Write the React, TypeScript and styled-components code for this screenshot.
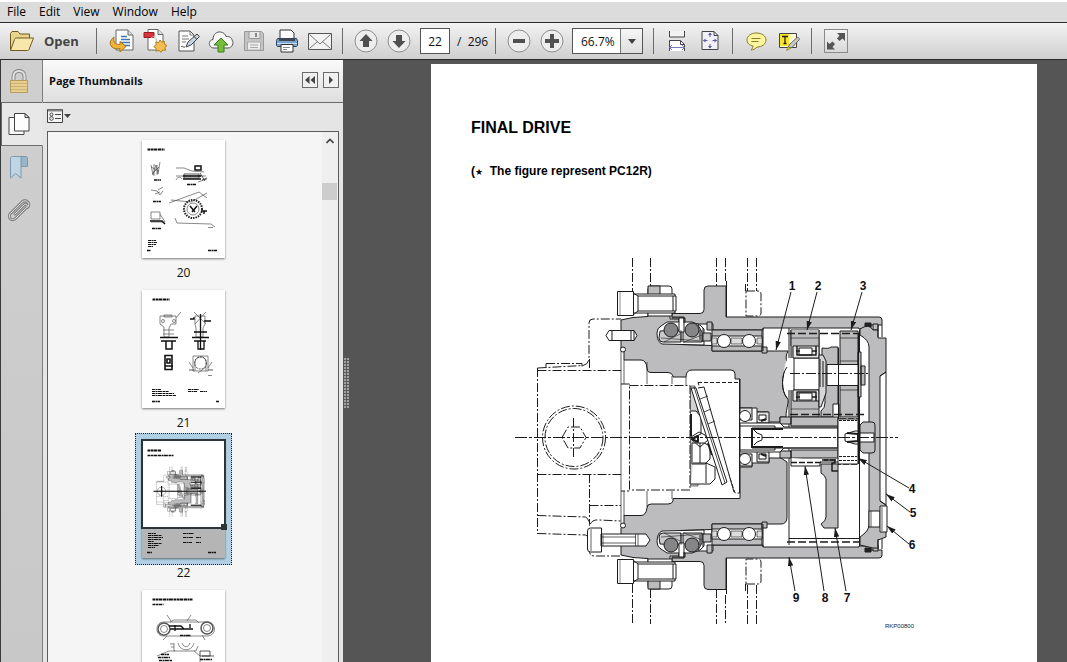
import React from 'react';
import styled, { createGlobalStyle, css } from 'styled-components';

const Global = createGlobalStyle`
  *, *::before, *::after { box-sizing: border-box; }
  body { margin: 0; font-family: "Open Sans", "Noto Sans", sans-serif; font-size: 12px; color: #111; }
  button, input, select { font: inherit; color: inherit; }
`;

const ink = '#1c1c1c';

/* ---------- Shell ---------- */

const Shell = styled.div`
  display: flex;
  flex-direction: column;
  height: 100vh;
  overflow: hidden;
  background: #555;
`;

const MenuBar = styled.nav`
  display: flex;
  flex: none;
  gap: 13px;
  height: 22px;
  padding: 0 7px;
  border-top: 2px solid #fff;
  background: #dcdcdc;
`;

const MenuItem = styled.button`
  padding: 0;
  border: 0;
  background: none;
  line-height: 20px;
  color: #000;
`;

const Toolbar = styled.div`
  display: flex;
  flex: none;
  align-items: center;
  height: 38px;
  padding-left: 9px;
  border: solid #2b2b2b;
  border-width: 1px 0;
  background: linear-gradient(#f3f3f3, #cfcfcf);
`;

const OpenButton = styled.button`
  display: flex;
  align-items: center;
  gap: 9px;
  width: 87px;
  padding: 0;
  border: 0;
  background: none;
  font-size: 13px;
  font-weight: 700;
  color: #444;
`;

const Separator = styled.span`
  flex: none;
  width: 1px;
  height: 26px;
  background: #6b6b6b;
`;

const ToolGroup = styled.div<{ $start?: number; $end?: number }>`
  display: flex;
  align-items: center;
  padding-left: ${(p) => p.$start ?? 6}px;
  padding-right: ${(p) => p.$end ?? 6}px;
`;

const ToolButton = styled.button`
  display: grid;
  place-items: center;
  flex: none;
  width: 33px;
  height: 28px;
  padding: 0;
  border: 0;
  background: none;
`;

const PageInput = styled.input`
  width: 30px;
  height: 26px;
  margin-left: 5px;
  padding: 0;
  border: 1px solid #555;
  background: #fff;
  text-align: center;
`;

const PageCount = styled.span`
  width: 38px;
  margin-left: 7px;
  white-space: pre;
`;

const ZoomBox = styled.div`
  position: relative;
  width: 71px;
  height: 26px;
  margin: 0 4px;
`;

const ZoomSelect = styled.select`
  width: 71px;
  height: 26px;
  padding: 0 0 0 8px;
  appearance: none;
  border: 1px solid #555;
  border-radius: 0;
  background: #fff;
`;

const ZoomArrow = styled.span`
  position: absolute;
  top: 1px;
  right: 1px;
  display: grid;
  place-items: center;
  width: 22px;
  height: 24px;
  border-left: 1px solid #777;
  background: linear-gradient(#f6f6f6, #dedede);
  pointer-events: none;
`;

const ExpandButton = styled.button`
  display: grid;
  place-items: center;
  width: 24px;
  height: 24px;
  margin-left: 12px;
  padding: 0;
  border: 1px solid #8a8a8a;
  background: linear-gradient(#f2f2f2, #d8d8d8);
`;

/* ---------- Side panel ---------- */

const Body = styled.div`
  display: flex;
  flex: 1;
  min-height: 0;
`;

const Rail = styled.div`
  display: flex;
  flex-direction: column;
  flex: none;
  width: 43px;
  border-left: 1px solid #3a3a3a;
  background: linear-gradient(#cfcfcf, #c8c8c8);
`;

const RailButton = styled.button<{ $active?: boolean }>`
  display: grid;
  place-items: center;
  flex: none;
  width: 42px;
  height: 43px;
  padding: 0 6px 0 0;
  border: 0;
  border-right: 1px solid #7c7c7c;
  background: none;
  ${(p) =>
    p.$active &&
    css`
      height: 44px;
      margin-top: -1px;
      border: 1px solid #6a6a6a;
      border-right-color: #e5e5e5;
      background: #e8e8e8;
    `}
`;

const RailFill = styled.div`
  flex: 1;
  border-right: 1px solid #7c7c7c;
`;

const Panel = styled.section`
  display: flex;
  flex-direction: column;
  flex: none;
  width: 300px;
  background: #e5e5e5;
`;

const PanelHeader = styled.header`
  display: flex;
  flex: none;
  align-items: center;
  gap: 5px;
  height: 43px;
  padding: 0 4px 2px 6px;
  border-bottom: 1px solid #6a6a6a;
  background: linear-gradient(#fafafa, #dedede);
`;

const PanelTitle = styled.h2`
  flex: 1;
  margin: 0;
  font-size: 11px;
  font-weight: 700;
  color: #111;
`;

const SmallButton = styled.button`
  display: grid;
  place-items: center;
  width: 16px;
  height: 16px;
  padding: 0;
  border: 1px solid #6a6a6a;
  background: #f0f0f0;
`;

const PanelTools = styled.div`
  display: flex;
  flex: none;
  align-items: center;
  height: 28px;
  padding: 0 0 2px 4px;
`;

const OptionsButton = styled.button`
  display: flex;
  padding: 0;
  border: 0;
  background: none;
`;

const ListFrame = styled.div`
  display: flex;
  flex: 1;
  min-height: 0;
  margin: 0 4px;
  border: solid #5c5c5c;
  border-width: 1px 1px 0;
  background: #f5f5f5;
`;

const ThumbList = styled.ol`
  display: flex;
  flex: 1;
  flex-direction: column;
  align-items: center;
  gap: 2px;
  margin: 0;
  padding: 1px 3px 0 0;
  overflow: hidden;
  list-style: none;
`;

const ThumbItem = styled.li`
  flex: none;
  text-align: center;
  line-height: 16px;
`;

const ThumbButton = styled.button<{ $active?: boolean }>`
  display: block;
  position: relative;
  width: 97px;
  height: 132px;
  padding: 6px;
  border: 1px dotted ${(p) => (p.$active ? '#222' : 'transparent')};
  background: ${(p) => (p.$active ? '#b1d0e3' : 'none')};
`;

const ThumbPage = styled.svg`
  display: block;
  background: #fff;
  box-shadow: 0 1px 2px rgba(0, 0, 0, 0.5);
`;

const ViewFrame = styled.span`
  position: absolute;
  top: 5px;
  left: 5px;
  width: 85px;
  height: 90px;
  border: 2px solid #2e3338;

  &::after {
    content: '';
    position: absolute;
    right: -3px;
    bottom: -3px;
    width: 6px;
    height: 6px;
    background: #2e3338;
  }
`;

const ScrollTrack = styled.div`
  flex: none;
  width: 16px;
  background: #efefef;
`;

const ScrollUp = styled.button`
  display: grid;
  place-items: center;
  width: 16px;
  height: 18px;
  margin-bottom: 33px;
  padding: 0;
  border: 0;
  background: none;
`;

const ScrollThumb = styled.div`
  width: 15px;
  height: 17px;
  background: #cdcdcd;
`;

/* ---------- Document ---------- */

const Viewer = styled.main`
  display: flex;
  flex: 1;
  min-width: 0;
  padding: 4px 30px 0 0;
  background: #555;
`;

const Splitter = styled.div`
  display: flex;
  flex: none;
  align-items: center;
  width: 88px;
  padding: 40px 0 0 1px;
`;

const Grip = styled.span`
  width: 5px;
  height: 50px;
  background: radial-gradient(circle at 1px 1px, #a0a0a0 30%, transparent 60%) 0 0 / 3px 3px;
`;

const Sheet = styled.article`
  flex: 1;
  min-width: 0;
  padding: 52px 40px 0;
  overflow: hidden;
  background: #fff;
  color: #000;
  font-family: "Liberation Sans", Arial, sans-serif;
`;

const SheetTitle = styled.h1`
  margin: 0 0 24px;
  font-size: 16px;
  line-height: 24px;
`;

const SheetNote = styled.p`
  margin: 0;
  font-size: 12px;
  font-weight: 700;
  line-height: 14px;
  white-space: pre;
`;

const Star = styled.span`
  font-family: "DejaVu Sans", sans-serif;
  font-size: 9px;
  line-height: 1;
`;

const Figure = styled.figure`
  margin: 76px 0 0 39px;
`;

/* ---------- Icons ---------- */

const FolderIcon = () => (
  <svg width="26" height="22" viewBox="0 0 26 22" stroke="#6f5b1f" strokeLinejoin="round">
    <path d="M1.500 19.500V3.500l1.500-2h6l2 2.500h9.500v3" fill="#e9d48b" />
    <path d="M20.500 7v9l-2 3.500" fill="#cdb163" />
    <path d="M1.500 20.500L5.500 9.500c.3-1 .8-1.500 2-1.500H24.500L20 19.500c-.3.700-.8 1-1.500 1z" fill="#f7e7ab" />
  </svg>
);

const PaperIcon = ({ children }: { children?: React.ReactNode }) => (
  <svg width="26" height="26" viewBox="0 0 26 26" fill="none" strokeLinejoin="round">
    {children}
  </svg>
);

const ExportIcon = () => (
  <PaperIcon>
    <path d="M7 2h12l5 5v15H7z" fill="#fdfdfd" stroke="#666" />
    <path d="M19 2v5h5" stroke="#666" fill="#ddd" />
    <path d="M12 8.500h6M12 11.500h9M12 14.500h9M14 17.500h7" stroke="#3d78b5" strokeWidth="1.500" />
    <path d="M5 9c-4 3-5 7-2 10 2 2 5 2 8 1.500V24l6-5.500-6-5v3c-4 .5-7-1.500-6-7.500z" fill="#eeb33b" stroke="#a87312" />
  </PaperIcon>
);

const CreateIcon = () => (
  <PaperIcon>
    <path d="M6 1.500h10l5 5V22H6z" fill="#fdfdfd" stroke="#666" />
    <path d="M16 1.500v5h5" stroke="#666" fill="#ddd" />
    <path d="M2 4.500h10v5H2z" fill="#d9343a" stroke="#98191f" />
    <path d="M9 10c5-4 6 1 5 5" stroke="#bbb" />
    <path d="M18 12l1.700 2.200 2.800-.8-.2 2.800 2.700 1.300-2.200 2 .9 2.700-2.900-.2-1.700 2.400-2.200-2-3 .8.300-2.800-2.400-1.800 2.400-1.900-.3-2.800 2.900.6z" fill="#f2bf55" stroke="#b07c1d" />
  </PaperIcon>
);

const SignIcon = () => (
  <PaperIcon>
    <path d="M4 3h11l4 4v16H4z" fill="#fdfdfd" stroke="#555" />
    <path d="M15 3v4h4M7 8h6M7 11h7M7 14h4" stroke="#777" />
    <path d="M11 19l2-5 9-8 2.500 2.500-8.500 8.500z" fill="#c8d4df" stroke="#3c444c" />
    <path d="M6 19c2-2 2 1 4 0M19 8.500l2.500 2.500" stroke="#333" />
  </PaperIcon>
);

const CloudIcon = () => (
  <PaperIcon>
    <path d="M6 20c-6 0-6-8-1-8.500C5 6 9 3.500 12.500 4c3 .2 5 2.500 5.500 4.500 4-.5 6 2 6 3.500 2.500 3 0 8-4 8z" fill="#f6f6f6" stroke="#555" />
    <path d="M13 10l7 7h-4v7h-6v-7H6z" fill="#76bd3e" stroke="#3d7c17" />
  </PaperIcon>
);

const SaveIcon = () => (
  <PaperIcon>
    <path d="M3.500 3.500h17l2 2v17h-19z" fill="#c4c4c4" stroke="#999" />
    <path d="M8 3.500h11v7H8z" fill="#e8e8e8" stroke="#999" />
    <path d="M15 5v4" stroke="#888" strokeWidth="2" />
    <path d="M6.500 14h13v8h-13z" fill="#ececec" stroke="#aaa" />
    <path d="M9 17h8M9 19.500h8" stroke="#aaa" />
  </PaperIcon>
);

const PrintIcon = () => (
  <PaperIcon>
    <path d="M6 2h11l3 3v7H6z" fill="#fdfdfd" stroke="#333" />
    <path d="M3.500 10.500h19l1 2v5l-1 1h-19l-1-1v-5z" fill="#7ba2c9" stroke="#28425f" />
    <path d="M5 10h16v3H5z" fill="#3c4652" />
    <path d="M3 15.500h20" stroke="#c3d8ea" />
    <path d="M7 16.500h12v7.500H7z" fill="#fff" stroke="#333" />
    <path d="M9 19.500h7M9 21.500h4" stroke="#888" />
  </PaperIcon>
);

const MailIcon = () => (
  <PaperIcon>
    <path d="M1.500 5.500h23v16h-23z" fill="#f3f3f3" stroke="#555" />
    <path d="M2.500 6.500L13 16 23.500 6.500M2.500 20.500l8-7M23.500 20.500l-8-7" stroke="#777" />
  </PaperIcon>
);

const RoundIcon = ({ d }: { d: string }) => (
  <svg width="26" height="26" viewBox="0 0 26 26">
    <circle cx="13" cy="13" r="11" fill="#ededed" stroke="#8d8d8d" />
    <path d={d} fill="#505050" />
  </svg>
);

const FitWidthIcon = () => (
  <PaperIcon>
    <path d="M5.500 3v6h15V3" fill="#f3f3f3" stroke="#444" />
    <path d="M5.500 23V12.500h11l4 4V23" fill="#fdfdfd" stroke="#444" />
    <path d="M16.500 12.500v4h4" stroke="#444" />
    <path d="M5 19.500h16M8 17l-2.500 2.500L8 22M18 17l2.500 2.500L18 22" stroke="#7a7ab8" />
  </PaperIcon>
);

const FitPageIcon = () => (
  <PaperIcon>
    <path d="M5 3.500h12l4 4v14H5z" fill="#f1f1f7" stroke="#444" />
    <path d="M17 3.500v4h4" stroke="#444" />
    <path d="M13 5v4M13 16v4M6.500 12.500h4M15.500 12.500h4" stroke="#5e5ea8" />
    <path d="M11 7l2-2.500L15 7zM11 18l2 2.500 2-2.500zM8.500 10.500L6 12.500l2.500 2zM17.500 10.500l2.500 2-2.500 2z" fill="#5e5ea8" />
  </PaperIcon>
);

const CommentIcon = () => (
  <PaperIcon>
    <path d="M13 5c6 0 10 3 10 7s-4 7-9 7c-2 2-4 3-6 3 1-1 2-2.500 2-4-4-.800-6-3-6-6 0-4 4-7 9-7z" fill="#fbf5a0" stroke="#8b7c28" />
    <path d="M8.500 10.500h9M8.500 13.500h7" stroke="#8b7c28" />
  </PaperIcon>
);

const HighlightIcon = () => (
  <PaperIcon>
    <path d="M3.500 5.500h17v14h-17z" fill="#fdf9cf" stroke="#444" />
    <path d="M4 6h9v12H4z" fill="#f8e62c" />
    <path d="M6 8.500h6M9 8.500v7M7.500 15.500h3" stroke="#222" strokeWidth="1.300" />
    <path d="M12 20l1.500-3.500 7-6.500c2-1.500 3.500.5 2.500 2l-7 7.500z" fill="#c9c9c9" stroke="#666" />
    <path d="M10.500 22.500l1.500-4 2.500 2z" fill="#f0d800" stroke="#555" strokeWidth=".5" />
  </PaperIcon>
);

const ExpandIcon = () => (
  <svg width="20" height="20" viewBox="0 0 20 20" fill="#555">
    <path d="M11 2h8v8l-2.500-2.500L13.500 10 11 7.500 13.500 4.500zM9 18.500H1v-8L3.500 13l3-2.500L9 13l-2.500 3z" />
  </svg>
);

const LockIcon = () => (
  <svg width="22" height="26" viewBox="0 0 22 26" fill="none">
    <path d="M5.500 12V7.500c0-7.500 11-7.500 11 0V12" stroke="#8a8a8a" strokeWidth="4" />
    <path d="M5.500 12V7.500c0-7.500 11-7.500 11 0V12" stroke="#dedede" strokeWidth="2" />
    <path d="M2.500 11.500h17v12h-17z" fill="#e9cf8c" stroke="#b59c63" />
    <path d="M3 14.500h16M3 17.500h16M3 20.500h16" stroke="#cbb077" />
  </svg>
);

const PagesIcon = () => (
  <svg width="24" height="26" viewBox="0 0 24 26" strokeLinejoin="round" stroke="#444">
    <path d="M2 6.500h15v17H2z" fill="#fafafa" />
    <path d="M7.500 2.500h10.500l4 4V20H7.500z" fill="#fdfdfd" />
    <path d="M18 2.500v4h4z" fill="#ddd" />
  </svg>
);

const BookmarkIcon = () => (
  <svg width="22" height="26" viewBox="0 0 22 26" strokeLinejoin="round" stroke="#7b98ad">
    <path d="M12 1.500h5.500c1.500 0 2 .800 2 2v8H12z" fill="#98b5c9" />
    <path d="M14.500 1.500H4.500c-1.500 0-2 1-2 2V23l5-4.500 5.500 4.500V4c0-1.500.5-2.500 1.500-2.500z" fill="#c0d5e3" />
  </svg>
);

const ClipIcon = () => (
  <svg width="24" height="26" viewBox="0 0 24 26" fill="none" strokeLinecap="round">
    {['#858585', '#dadada'].map((stroke, i) => (
      <path key={stroke} stroke={stroke} strokeWidth={i ? 1 : 3} d="M8 16l9-9c2-2 4.500.5 2.500 2.500L9 20c-4 4-9-.5-5.500-4.500L15 4c4-3.500 9.500 1.500 5.500 5.500" />
    ))}
  </svg>
);

/* ---------- Final drive section drawing ---------- */

const grey = '#bcbcbe';
const dashDot = '9 2 2 2';

/* Parts that repeat, mirrored, above and below the shaft axis. */
const MirroredParts = () => (
  <g>
    {/* flange screw */}
    <path d="M648 296v-6q0-3 3-3h18q3 0 3 3v27h-24z" fill="#fff" />
    <path d="M648 296v-9h12v9z" fill={grey} />
    <path d="M633 295h42v19h-42z" fill="#fff" />
    <path d="M617.500 292.500h16v24h-16zM638 297h38v15h-38zM633 294l5 3M633 316l5-4M673 297v15" fill="#fff" />
    <path d="M620 293v23" strokeWidth=".5" />
    {/* mounting flange bolt */}
    <path d="M746 292h12q3 0 3 3v19q0 3-3 3h-12z" fill="none" strokeDasharray={dashDot} />
    <path d="M726.500 282v36M745.500 285v7" />
    {/* floating seal */}
    <path d="M657 334q0-5 4-7l6-4 25 0 8 3 4 4v16l-42-1q-5-2-5-11z" fill="#fff" />
    <path d="M660 332l-1 7q0 4 4 4h18v-12zM683 331v12h19v-10l-4-7" fill="#cacacc" />
    <path d="M679 319h5v14h-5z" fill="#fff" />
    <path d="M672 318h12v6M703 329v14M700 331v10" fill="none" />
    <path d="M661 339l42 3M664 343l16-8M684 343l18-7M681 331v12" strokeWidth=".6" />
    <circle cx="671" cy="331" r="7" fill="#858587" />
    <circle cx="692" cy="331" r="7" fill="#858587" />
    <path d="M707 323h5v8h-5zM703 334h8v8h-8z" fill={grey} />
    {/* main bearing */}
    <path d="M712 331h50v21h-50z" fill={grey} />
    <path d="M712 337h50v10h-50z" fill="#fff" />
    <path d="M712 339h5v6h-5zM757 339h5v6h-5zM731 339h11v6h-11z" fill="#ddd" strokeWidth=".6" />
    <circle cx="724" cy="342" r="6.500" fill="#fff" />
    <circle cx="749" cy="342" r="6.500" fill="#fff" />
    <path d="M762 348h5v6h-5z" fill={grey} />
    {/* cover seal */}
    <path d="M865 324h6v4h-6z" fill="#222" />
    <path d="M873 325h5v6h-5z" fill={grey} />
  </g>
);

const FinalDrive = ({ line = 1, labels = true }: { line?: number; labels?: boolean }) => (
  <g stroke={ink} strokeWidth={line} fill="none" strokeLinejoin="round">
    {/* hydraulic motor housing outline */}
    <g strokeDasharray={dashDot}>
      <path d="M537.500 369L583 366.500q6-1 6-8V324q0-4 4-4h28M537.500 369V535M537.500 371.500H621M589.500 360v12M546 364.500h36v3M546 364.500v4" />
      <path d="M537.500 475.500H621M589.500 475v50M589.500 506.500H621M537.500 516.500l48 1.500q4 2 4 9 2-7 10-6l21 1M537.500 534.500l48 1.500q4 1 4 8v8q0 5 5 5h27" />
      <path d="M621 385h8.500v107H621M629.500 386.500H690V491H629.500" />
      <circle cx="574" cy="438.500" r="31.500" />
      <circle cx="574" cy="438.500" r="29" />
      <path d="M562 438.500l6-10.500h12l6 10.500-6 10.500h-12zM573.500 419v40" />
      <path d="M632.500 259v34M650.500 259v28M716.500 259v28M725.500 259v23M747.500 259v33M756.500 259v33" />
      <path d="M632.500 585v40M650.500 590v35M716.500 590v35M725.500 596v29M747.500 586v39M756.500 586v39" />
    </g>

    {/* outer casing */}
    <path d="M672 314.500h28q4 0 4-4V291q0-4 4-4h18v31h153q3 0 3 3v5h-11v4h-12v-1h-96v2h-50v-6h-28v-6h-13z" fill={grey} />
    <path d="M672 562.500h28q4 0 4 4v20q0 4 4 4h18V559h153q3 0 3-3v-5h-11v-4h-12v1h-96v-2h-50v6h-28v6h-13z" fill={grey} />

    {/* hub, upper and lower halves */}
    <path
      d="M621 321L633 318.500L648 317.500V314H670V320H679V345.500L712 346.500V352H788C784 360 788 362 787 368C781 376 781 392 787 399C790 402 786 408 786 418H780V423H768V413H757V409H740V380H735V375Q735 371 731 371H692Q686 371 686 378H673V377Q672 373.500 668 373.500H651Q647 373.500 647 369Q646 361 641 361H624V352L621 348Z"
      fill={grey}
    />
    <path
      d="M621 556L633 558.500L648 559.500V563H670V557H679V531.500L712 530.500V525H781Q787 525 787 518V463L781 459H769V464H752V468H740V499.500H673V502Q672 505 668 505H651Q647 505 647 509Q646 516.500 641 516.500H624V525L621 529Z"
      fill={grey}
    />
    <path d="M621 348v180M624 361v24M624 492v25M647 363v22M672 377v8M672 492v8M647 492v16M686 378v8" strokeWidth=".7" />
    <circle cx="623" cy="350.500" r="2.500" fill="#fff" />
    <circle cx="623" cy="526.500" r="2.500" fill="#fff" />

    <MirroredParts />
    <g transform="matrix(1 0 0 -1 0 877)">
      <MirroredParts />
    </g>

    {/* locating pin and motor screw */}
    <path d="M609 331.500h25v10h-25l-3-5zM634 331.500l3 5-3 5M612 332v9M631 332v9" fill="#fff" />
    <path d="M601 535h45l4 6-4 6h-45zM587.500 532q0-3 3-3h11v24h-11q-3 0-3-3z" fill="#fff" />
    <path d="M603 536v11M635.500 535v12M638 535v12M591 530v22M601 538h35M601 544h35" strokeWidth=".7" />

    {/* swash plate and pistons */}
    <path d="M698 383.500h41.500V494H735z" fill="#fff" strokeDasharray="4 2" />
    <path d="M739.500 380v114" />
    <path d="M690.500 387h4.500l3 28v72h-7.500z" fill="#d2d2d4" strokeWidth=".6" />
    <path d="M691 412h5l5 6v17l-9 4M691 438l8-5 6 3 3 5-8 7-9-8M692 444h12l6 3v13l-5 5h-13zM693 464h13l9 4v12l-5 5h-19M700 444v20M706 464v20" fill="#fff" />
    <path d="M691 415v22M692 440l6-3v6zM708 444l4 12" strokeWidth="2" />
    <path d="M691 389h5l31 94-5 3zM698 389l6-1 30 105" fill="#fff" />
    <path d="M694 388l31 96M700 400l8-3M704 413l7-3M708 425l7-3" strokeWidth=".8" />

    {/* shaft support bearing */}
    <path d="M740 409h12v12h-12zM740 455h12v12h-12zM757 413h12v11h-12zM757 452h12v11h-12z" fill="#e2e2e4" />
    <circle cx="745" cy="417" r="5.500" fill="#fff" />
    <circle cx="745" cy="460" r="5.500" fill="#fff" />
    <path d="M759 416h7v5h-7zM759 455h7v5h-7z" fill="#fff" />
    <path d="M761 422l5-2M761 455l5 2" strokeWidth="2" />

    {/* gear train */}
    <path d="M789 329v217M859.500 331v216M763 329v23M763 525v23" />
    <path d="M791 331h28v16h-28z" fill={grey} />
    <path d="M791 331v87h28v-87" fill={grey} />
    <path d="M791 339h28M791 410h28" strokeWidth=".6" />
    <path d="M788 359h32v32h-32q-4-6-4-16t4-16z" fill="#fff" stroke="none" />
    <path d="M794 359h26v32h-26z" fill="#fff" />
    <path d="M793 347h26v12h-26zM793 391h26v11h-26z" fill="#e6e6e6" />
    <path d="M799 349h13v7h-13zM799 394h13v7h-13z" fill="#fff" />
    <path d="M797 347v9h19v-9M797 402v-9h19v9M796 352h4M812 352h5M796 398h4M812 398h5" strokeWidth="1.500" />
    <path d="M822 349q7 1 9-1h7v70h-17v-6q4-3 4-8v-42h-3z" fill={grey} />
    <path d="M819 356h4l3 6v32l-5 14h-2z" fill="#d6d6d8" />
    <path d="M840 332h18v86h-18z" fill={grey} />
    <path d="M840 339h18M840 362h18M840 391h18" strokeWidth=".7" />
    <path d="M827 365.500h34v21h-34z" fill="#fff" />
    <path d="M858 353h3v45h-3zM861 367h4v19h-4z" fill={grey} />
    <path d="M833 405h6v15h-6z" fill="#fff" />
    <path d="M838.500 349v115M858.500 335v130M820 360v28M823 362v26" />
    <path d="M787 334.500h78M790 415.500h74" strokeWidth="1.500" strokeDasharray="8 3" />
    <path d="M790 374.500h78" strokeDasharray="10 2 2 2" />
    <path d="M787 368c-6 8-6 24 0 31" />

    {/* sun gear and drive shaft */}
    <path d="M780 418h11v7h-11zM791 418h47v9h-47zM780 452h11v7h-11zM791 451h47v8h-47z" fill={grey} />
    <path d="M791 459v8h29v-4h18" fill="#fff" />
    <path d="M791 463.500h30M822 461h16M840 420h18v45h-20" strokeWidth="1.500" strokeDasharray="6 2" />
    <path d="M740 424h40l4 4h54v21h-54l-4 4h-40z" fill="#fff" />
    <path d="M752 429h86v20h-86zM740 427h35v3M740 451h35v-3" />
    <path d="M752 429v20M753 430h30M753 448h30" strokeWidth="2" />
    <path d="M754 431l3 3 5 2v5l-5 2-3 3" />
    <path d="M838 420h20v45h-20z" fill="#fff" />
    <path d="M839 421.500h18M839 457.500h18M839 461.500h18" strokeDasharray="3 1" />

    {/* lower carrier */}
    <path d="M821 465h17v64h-14l-3-4q5-3 5-7v-38q-1-4-5-6z" fill={grey} />
    <path d="M824 461h11v3h-3v8h6" strokeWidth="1.500" />
    <path d="M789 539.500h70" />
    <path d="M787 543h74" strokeWidth="1.500" strokeDasharray="8 3" />

    {/* end cover, centre bolt and plug */}
    <path d="M860 330q9-6 13 1h5v8h8v34l-6 4v125l6 4v32l-8 3v8h-5l-13-3v-8q9-6 9-12V348q0-7-9-12z" fill={grey} />
    <path d="M886 373v133M880 377l6-4M880 502l6 4M878 326v12M882 326v12M878 540v10M882 540v10" />
    <path d="M863 423h9q3 0 3 3v25q0 3-3 3h-9l-3-3v-25z" fill={grey} />
    <path d="M860 434h14v9h-14zM845 435l10-3h3v13h-3l-10-3z" fill="#fff" />
    <path d="M847 434l11 1v7l-11 1" strokeWidth="2" />
    <path d="M869 512h11v16h-11z" fill="#fff" />
    <path d="M880 507h7v26h-7z" fill="#fff" />
    <path d="M882 508v24M871 512v16" strokeWidth=".7" />

    {/* shaft axis */}
    <path d="M515 438.500h383" strokeDasharray="12 2 3 2" strokeWidth={line * 1.2} />

    {labels && (
      <g>
        <defs>
          <marker id="tip" viewBox="0 0 10 6" refX="10" refY="3" markerWidth="9" markerHeight="6" markerUnits="userSpaceOnUse" orient="auto">
            <path d="M0 0L10 3L0 6z" fill={ink} stroke="none" />
          </marker>
        </defs>
        {[
          'M791 293L776 351',
          'M817 293L807 331',
          'M862 293L851 331',
          'M909 489L858 459',
          'M910 513L886 495',
          'M909 545L887 527',
          'M846 592L835 529',
          'M824 592L805 467',
          'M795 592L789 558',
        ].map((d) => (
          <path key={d} d={d} markerEnd="url(#tip)" />
        ))}
        <g fill="#111" stroke="none" fontFamily='"Liberation Sans Narrow", "Liberation Sans", sans-serif' fontSize="12" fontWeight="700" textAnchor="middle">
          <text x="792" y="291">1</text>
          <text x="818" y="291">2</text>
          <text x="863" y="291">3</text>
          <text x="912" y="494">4</text>
          <text x="913" y="518">5</text>
          <text x="912" y="550">6</text>
          <text x="847" y="603">7</text>
          <text x="825" y="603">8</text>
          <text x="796" y="603">9</text>
        </g>
        <text x="885" y="629" fill="#222" stroke="none" fontFamily='"Liberation Sans", sans-serif' fontSize="6">RKP00800</text>
      </g>
    )}
  </g>
);

/* ---------- Thumbnails ---------- */

const Scribble = ({ d, w = 2 }: { d: string; w?: number }) => (
  <path d={d} stroke="#111" strokeWidth={w} strokeDasharray="3 .5 2 .4 4 .6" fill="none" />
);

const Thumb20 = () => (
  <g fill="none" stroke="#555" strokeWidth=".7">
    <Scribble d="M5.500 9.500h17" />
    <path d="M9 25l2 10 3-10 2 9 2-12M9 27l8 4M10 34l7-7M12 24v12M15 25v10" />
    <path d="M34 28h8l8 3 12 1M34 40c2-4 5-3 6-1M56 42l9-3M34 36h30" />
    <path d="M53 26h6v4h-6zM41 36h18M41 39h18" stroke="#111" strokeWidth="1.500" />
    <path d="M42 34h15v4H42zM58 33l5 8M60 40l5-2" stroke="#111" />
    <path d="M9 50l6 1 3 4 3-4M16 50l5-3M13 54l5-2" />
    <path d="M9 72h9v7H9zM18 74l5 8M9 82h12" />
    <path d="M8 81h12l3 3" stroke="#111" strokeWidth="1.500" />
    <path d="M27 63l30-11 8 6M29 60l20 2 16-9M33 78l2 5 34 1 4 3" />
    <circle cx="51" cy="69" r="9" stroke="#222" strokeWidth="2" strokeDasharray="1.500 1" />
    <circle cx="51" cy="69" r="6" />
    <path d="M48 66l5 6M50 72l5-6M59 71h6M62 71v3" stroke="#111" strokeWidth="1.500" />
    <Scribble w={1.3} d="M12 40h7M11 61.500h8M10 88.500h9M45 44.500h9M66 110.500h9M5 110.500h4" />
    <Scribble w={1} d="M6 100.500h8M6 102.500h9M6 104.500h8M6 106.500h5" />
    <path d="M66 87.500h5" />
  </g>
);

const Thumb21 = () => (
  <g fill="none" stroke="#555" strokeWidth=".7">
    <Scribble d="M10.500 9.500h17" />
    <path d="M18 26h16v8h-5l-2 4v9h-5v-10l-4-3zM22 25h8v2h-8zM34 28l5-6M21 40h11M21 44h11" />
    <circle cx="21" cy="31" r="1.500" />
    <circle cx="32" cy="31" r="1.500" />
    <path d="M18 47.500h18M19 51h15M24 51v8h6v-8" stroke="#111" strokeWidth="1.500" />
    <path d="M53 26h10v8l-2 4v9h-7v-9l-1-4zM52 22l12 12M64 22L53 34" />
    <path d="M48 29h4v-2M62 31h7M50 47.500h17M52 51h12M56 51v8h6v-8M58.500 24v36M52 42h13" stroke="#111" strokeWidth="1.300" />
    <path d="M23 65.500h7v14h-7zM25 69h3v4h-3zM23 76h8" stroke="#111" strokeWidth="1.600" />
    <path d="M51 66h15v15H51zM53 81v-9c1-7 11-7 11 0v9M56 83l8-6M47 72l4 6M70 72l-4 6" />
    <circle cx="58.500" cy="73" r="6" strokeDasharray="2 1" stroke="#111" />
    <path d="M47 80h5M66 80h5" stroke="#111" />
    <Scribble w={1} d="M10 99.500h9M10 101.500h17M10 103.500h22M10 105.500h24M46 99.500h11M46 101.500h9M58 101.500h7" />
    <Scribble w={1.3} d="M10 111.500h8M74 111.500h3" />
    <path d="M66 85.500h4" />
  </g>
);

const Thumb22 = () => (
  <g>
    <rect y="88" width="83" height="30" fill="#b5b5b5" />
    <Scribble d="M5.500 10.500h14" />
    <Scribble w={1.500} d="M5.500 15.500h26" />
    <g transform="scale(.137) translate(-431 -64)">
      <FinalDrive line={2} labels={false} />
      <path d="M515 438.500h383M574 400v76M790 334h74M790 372h74M790 415h74M790 540h74" stroke="#111" strokeWidth="8" />
    </g>
    <Scribble w={1} d="M6 93.500h8M6 95.500h14M6 97.500h15M6 99.500h13M6 101.500h6M6 103.500h14M6 105.500h11M6 107.500h7M41 93.500h11M41 97.500h10M54 97.500h5M41 102.500h9M54 102.500h5" />
    <Scribble w={1.3} d="M5 112.500h5M66 112.500h8" />
  </g>
);

const Thumb23 = () => (
  <g fill="none" stroke="#555" strokeWidth=".7">
    <Scribble d="M10.500 9.500h40" />
    <Scribble w={1.500} d="M10.500 14.500h11" />
    <circle cx="22" cy="39" r="6" strokeWidth="1.500" />
    <circle cx="22" cy="39" r="3.500" />
    <circle cx="65" cy="38" r="6" strokeWidth="1.500" />
    <circle cx="65" cy="38" r="3.500" />
    <path d="M15 39c0-5 3-7 7-7h43c10 0 10 14 0 14H22c-4 0-7-2-7-7zM28 32l4-2h22l3 3M25 25l4 6M49 25l-4 6M25 46l-4 4M60 45l3 5" />
    <path d="M27 36h12l3 3h9M28 39h20M33 35v6M48 34v4" stroke="#111" strokeWidth="1.300" />
    <path d="M32 53v8h22l2-5M36 53c2 9 14 9 16 0M40 53c2 5 6 5 8 0M28 54h4M29 57h3M52 61l6 5v10M15 66l12-5h6" />
    <path d="M58 61h10v5H58zM60 66h12" stroke="#111" />
    <Scribble w={1.600} d="M19 64.500h8M16 67.500h12M17 70.500h13M38 45.500h11M58 69.500h12" />
  </g>
);

const thumbs = [
  { page: 20, Art: Thumb20, caption: '20' },
  { page: 21, Art: Thumb21, caption: '21' },
  { page: 22, Art: Thumb22, caption: '22' },
  { page: 23, Art: Thumb23 },
];

const CURRENT = 22;

const fileTools = [
  { label: 'Export', Icon: ExportIcon },
  { label: 'Create PDF', Icon: CreateIcon },
  { label: 'Sign', Icon: SignIcon },
  { label: 'Upload', Icon: CloudIcon },
  { label: 'Save', Icon: SaveIcon },
  { label: 'Print', Icon: PrintIcon },
  { label: 'Send by e-mail', Icon: MailIcon },
];

export default function App() {
  return (
    <Shell>
      <Global />
      <MenuBar aria-label="Application menu">
        {['File', 'Edit', 'View', 'Window', 'Help'].map((name) => (
          <MenuItem key={name}>{name}</MenuItem>
        ))}
      </MenuBar>

      <Toolbar role="toolbar">
        <OpenButton>
          <FolderIcon />
          Open
        </OpenButton>
        <Separator />
        <ToolGroup $start={8}>
          {fileTools.map(({ label, Icon }) => (
            <ToolButton key={label} aria-label={label}>
              <Icon />
            </ToolButton>
          ))}
        </ToolGroup>
        <Separator />
        <ToolGroup $end={0}>
          <ToolButton aria-label="Previous page">
            <RoundIcon d="M13 6l6.500 7H16v6h-6v-6H6.500z" />
          </ToolButton>
          <ToolButton aria-label="Next page">
            <RoundIcon d="M13 20l6.500-7H16V7h-6v6H6.500z" />
          </ToolButton>
          <PageInput aria-label="Page number" defaultValue="22" />
          <PageCount>{'/  296'}</PageCount>
        </ToolGroup>
        <Separator />
        <ToolGroup>
          <ToolButton aria-label="Zoom out">
            <RoundIcon d="M7 11h12v4H7z" />
          </ToolButton>
          <ToolButton aria-label="Zoom in">
            <RoundIcon d="M11 6h4v5h5v4h-5v5h-4v-5H6v-4h5z" />
          </ToolButton>
          <ZoomBox>
            <ZoomSelect aria-label="Zoom level" defaultValue="66.7%">
              <option>66.7%</option>
            </ZoomSelect>
            <ZoomArrow>
              <svg width="8" height="5" viewBox="0 0 8 5"><path d="M0 0h8L4 5z" fill="#444" /></svg>
            </ZoomArrow>
          </ZoomBox>
        </ToolGroup>
        <Separator />
        <ToolGroup>
          <ToolButton aria-label="Fit width"><FitWidthIcon /></ToolButton>
          <ToolButton aria-label="Fit page"><FitPageIcon /></ToolButton>
        </ToolGroup>
        <Separator />
        <ToolGroup>
          <ToolButton aria-label="Add comment"><CommentIcon /></ToolButton>
          <ToolButton aria-label="Highlight text"><HighlightIcon /></ToolButton>
        </ToolGroup>
        <Separator />
        <ExpandButton aria-label="Full screen"><ExpandIcon /></ExpandButton>
      </Toolbar>

      <Body>
        <Rail>
          <RailButton aria-label="Security"><LockIcon /></RailButton>
          <RailButton aria-label="Page thumbnails" $active><PagesIcon /></RailButton>
          <RailButton aria-label="Bookmarks"><BookmarkIcon /></RailButton>
          <RailButton aria-label="Attachments"><ClipIcon /></RailButton>
          <RailFill />
        </Rail>

        <Panel>
          <PanelHeader>
            <PanelTitle>Page Thumbnails</PanelTitle>
            <SmallButton aria-label="Collapse panel">
              <svg width="10" height="8" viewBox="0 0 10 8"><path d="M4.500 0v8L0 4zM10 0v8L5.500 4z" fill="#444" /></svg>
            </SmallButton>
            <SmallButton aria-label="Expand panel">
              <svg width="6" height="8" viewBox="0 0 6 8"><path d="M1 0v8l4-4z" fill="#444" /></svg>
            </SmallButton>
          </PanelHeader>
          <PanelTools>
            <OptionsButton aria-label="Thumbnail options">
              <svg width="24" height="16" viewBox="0 0 24 16" fill="none" stroke="#444">
                <path d="M.5 1.500h15v13H.5z" fill="#f4f4f4" />
                <path d="M1 2.500h14" strokeWidth="2" stroke="#888" />
                <circle cx="4.500" cy="6.500" r="1.500" />
                <circle cx="4.500" cy="10.500" r="1.800" />
                <path d="M8 6.500h6M8 10.500h6" />
                <path d="M17 6h7l-3.500 4z" fill="#444" stroke="none" />
              </svg>
            </OptionsButton>
          </PanelTools>
          <ListFrame>
            <ThumbList>
              {thumbs.map(({ page, Art, caption }) => (
                <ThumbItem key={page}>
                  <ThumbButton $active={page === CURRENT} aria-label={`Page ${page}`}>
                    <ThumbPage width="83" height="118" viewBox="0 0 83 118"><Art /></ThumbPage>
                    {page === CURRENT && <ViewFrame />}
                  </ThumbButton>
                  {caption}
                </ThumbItem>
              ))}
            </ThumbList>
            <ScrollTrack>
              <ScrollUp aria-label="Scroll up">
                <svg width="8" height="6" viewBox="0 0 8 6"><path d="M.5 5L4 1.500 7.500 5" fill="none" stroke="#444" strokeWidth="1.600" /></svg>
              </ScrollUp>
              <ScrollThumb />
            </ScrollTrack>
          </ListFrame>
        </Panel>

        <Viewer>
          <Splitter><Grip /></Splitter>
          <Sheet>
            <SheetTitle>FINAL DRIVE</SheetTitle>
            <SheetNote>(<Star>★</Star>{'  '}The figure represent PC12R)</SheetNote>
            <Figure>
              <svg width="410" height="380" viewBox="510 255 410 380" role="img" aria-label="Section of the final drive">
                <FinalDrive />
              </svg>
            </Figure>
          </Sheet>
        </Viewer>
      </Body>
    </Shell>
  );
}
